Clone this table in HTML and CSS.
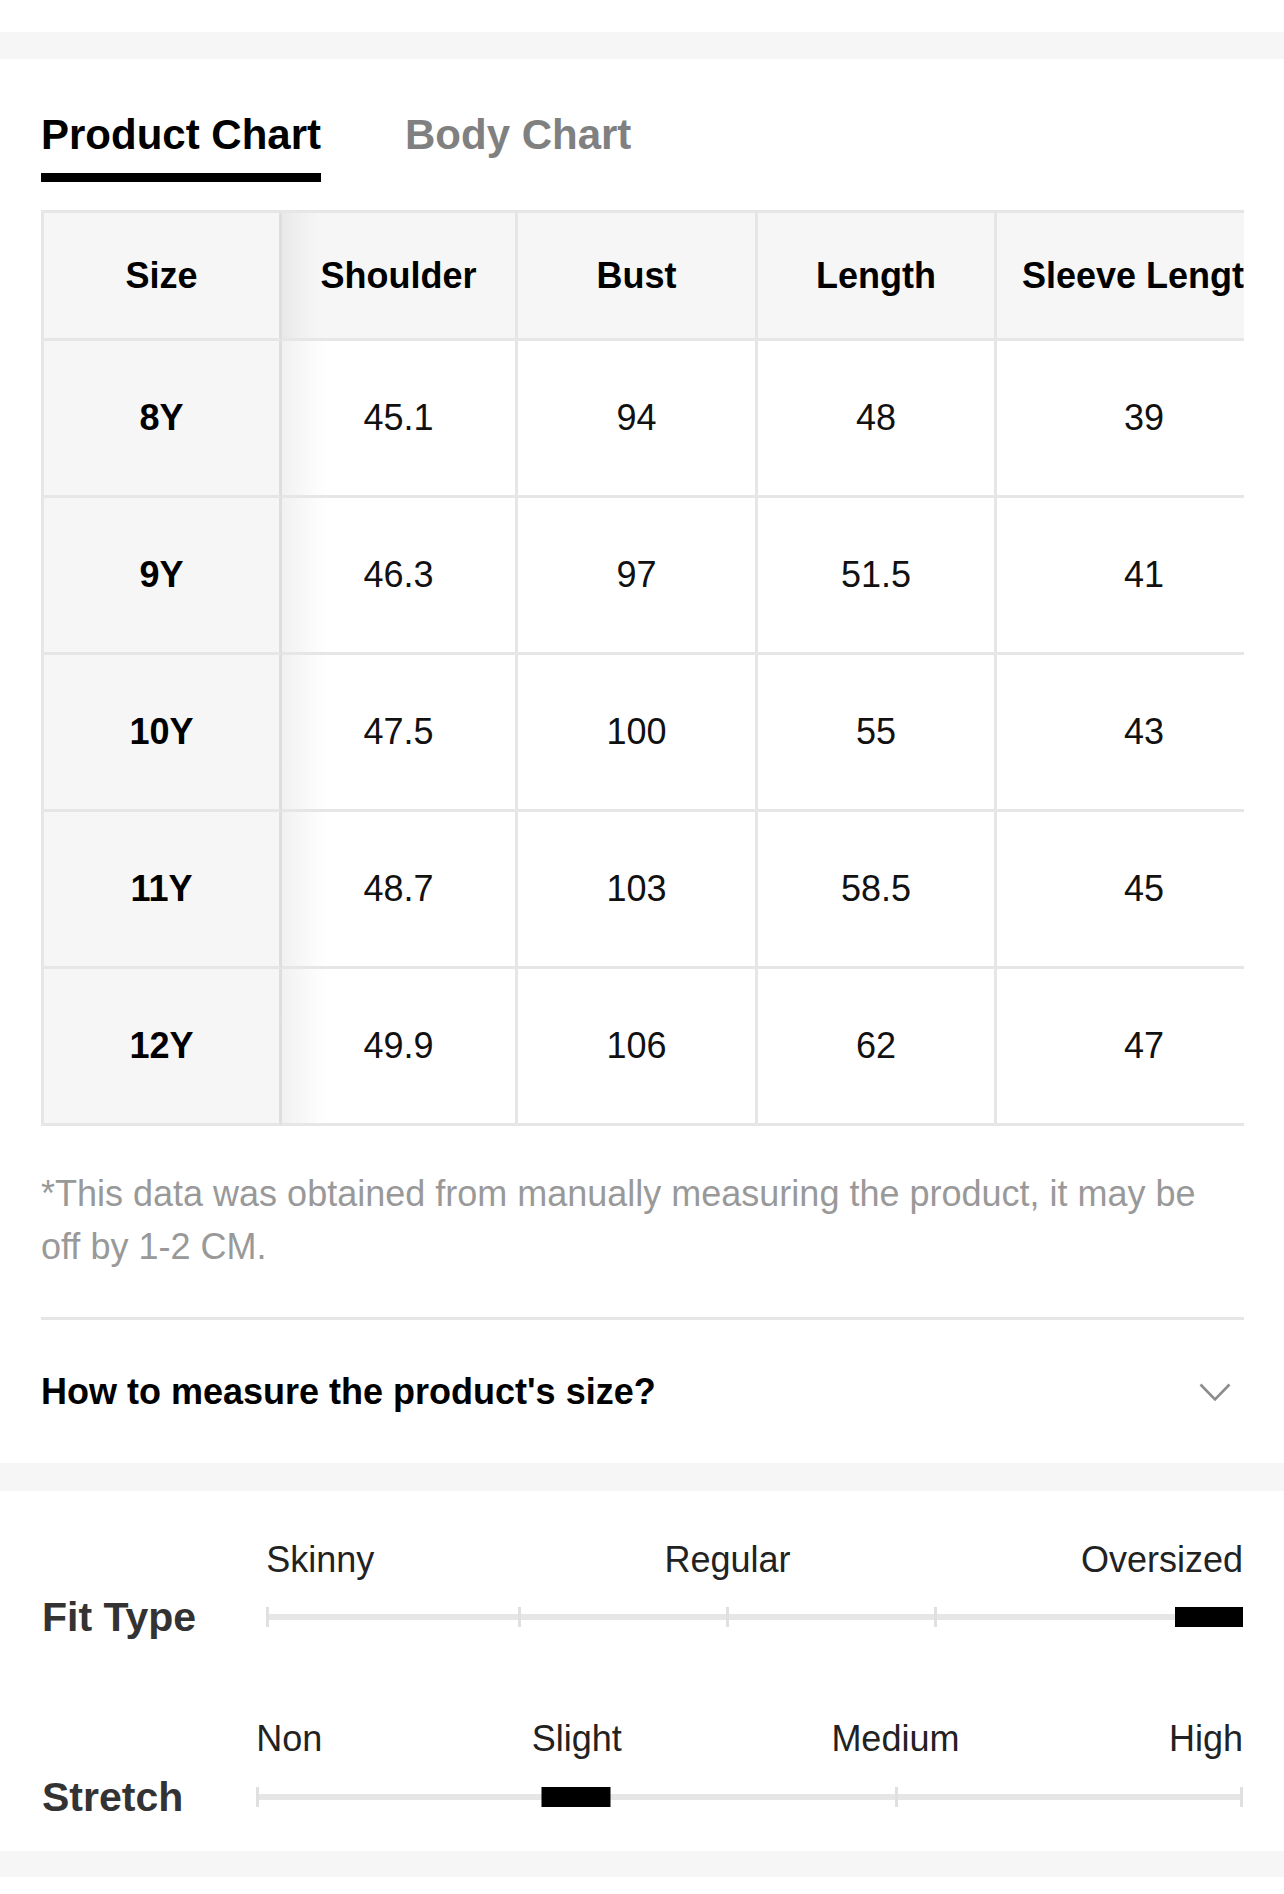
FILE: index.html
```html
<!DOCTYPE html>
<html lang="en">
<head>
<meta charset="utf-8">
<title>Size Chart</title>
<link rel="stylesheet" href="styles.css">
</head>
<body>
<div class="top-space"></div>
<div class="band"></div>
<section class="card">
  <nav class="tabs">
    <div class="tab tab-active">Product Chart</div>
    <div class="tab">Body Chart</div>
  </nav>
  <div class="table-wrap">
    <table class="chart">
      <thead>
        <tr>
          <th class="c-size">Size</th>
          <th class="c-shade">Shoulder</th>
          <th class="c-bust">Bust</th>
          <th class="c-len">Length</th>
          <th class="c-wide">Sleeve Length</th>
        </tr>
      </thead>
      <tbody>
        <tr><td class="c-size">8Y</td><td class="c-shade">45.1</td><td class="c-bust">94</td><td class="c-len">48</td><td class="c-wide">39</td></tr>
        <tr><td class="c-size">9Y</td><td class="c-shade">46.3</td><td class="c-bust">97</td><td class="c-len">51.5</td><td class="c-wide">41</td></tr>
        <tr><td class="c-size">10Y</td><td class="c-shade">47.5</td><td class="c-bust">100</td><td class="c-len">55</td><td class="c-wide">43</td></tr>
        <tr><td class="c-size">11Y</td><td class="c-shade">48.7</td><td class="c-bust">103</td><td class="c-len">58.5</td><td class="c-wide">45</td></tr>
        <tr><td class="c-size">12Y</td><td class="c-shade">49.9</td><td class="c-bust">106</td><td class="c-len">62</td><td class="c-wide">47</td></tr>
      </tbody>
    </table>
  </div>
  <p class="note">*This data was obtained from manually measuring the product, it may be off by 1-2 CM.</p>
  <div class="accordion">
    <span class="acc-title">How to measure the product's size?</span>
    <svg class="chev" width="32" height="19" viewBox="0 0 32 19" aria-hidden="true"><polyline points="1.5,1.5 16,16.5 30.5,1.5" fill="none" stroke="#8c8c8c" stroke-width="2.6"/></svg>
  </div>
</section>
<div class="band band-2"></div>
<section class="fit">
  <div class="metric metric-fit">
    <div class="scale-labels"><span>Skinny</span><span>Regular</span><span>Oversized</span></div>
    <div class="metric-name">Fit Type</div>
    <div class="track">
      <i class="tick" style="left:0%"></i>
      <i class="tick" style="left:25.8%"></i>
      <i class="tick" style="left:47.1%"></i>
      <i class="tick" style="left:68.4%"></i>
      <i class="tick tick-end"></i>
      <b class="marker marker-end"></b>
    </div>
  </div>
  <div class="metric metric-stretch">
    <div class="scale-labels"><span>Non</span><span>Slight</span><span>Medium</span><span>High</span></div>
    <div class="metric-name">Stretch</div>
    <div class="track">
      <i class="tick" style="left:0%"></i>
      <i class="tick" style="left:64.7%"></i>
      <i class="tick tick-end"></i>
      <b class="marker marker-mid" style="left:32.4%"></b>
    </div>
  </div>
</section>
<div class="band band-3"></div>
</body>
</html>
```
FILE: styles.css
```css
* { box-sizing: border-box; }
html, body { margin: 0; padding: 0; background: #fff; }
body {
  font-family: "Liberation Sans", Arial, Helvetica, sans-serif;
  color: #111;
}
.top-space { height: 32px; }
.band { height: 27px; background: #f6f6f6; }
.band-2 { height: 28px; }
.band-3 { height: 26px; }

.card { padding: 52px 40px 0 41px; }

.tabs { display: flex; gap: 84px; }
.tab {
  font-size: 42px;
  line-height: 48px;
  font-weight: 700;
  color: #808080;
  padding-bottom: 14px;
}
.tab-active {
  color: #000;
  border-bottom: 9px solid #000;
}

.table-wrap {
  margin-top: 28px;
  width: 100%;
  overflow: hidden;
}
.chart {
  border-collapse: separate;
  border-spacing: 0;
  border-top: 3px solid #e6e6e6;
  border-left: 3px solid #e6e6e6;
  font-size: 36px;
  line-height: 42px;
}
.chart th, .chart td {
  width: 238px;
  min-width: 238px;
  padding: 0;
  text-align: center;
  vertical-align: middle;
  white-space: nowrap;
  border-right: 3px solid #e6e6e6;
  border-bottom: 3px solid #e6e6e6;
}
.chart .c-shade { width: 236px; min-width: 236px; }
.chart .c-bust { width: 240px; min-width: 240px; }
.chart .c-len { width: 239px; min-width: 239px; }
.chart th {
  height: 128px;
  background: #f6f6f6;
  font-weight: 700;
  color: #000;
}
.chart td {
  height: 157px;
  font-weight: 400;
  color: #111;
  background: #fff;
}
.chart td.c-size {
  background: #f6f6f6;
  font-weight: 700;
  color: #000;
}
.chart .c-size { border-right-color: #dedede; }
.chart th.c-shade {
  background: linear-gradient(90deg, #e9e9e9, #f6f6f6 36px);
}
.chart td.c-shade {
  background: linear-gradient(90deg, #f1f1f1, #ffffff 44px);
}
.chart .c-wide {
  width: auto;
  min-width: 0;
  padding: 0 25px;
}

.note {
  margin: 41px 0 0;
  font-size: 36px;
  line-height: 53px;
  color: #999;
  padding-right: 4px;
}

.accordion {
  margin-top: 44px;
  border-top: 3px solid #e6e6e6;
  height: 146px;
  display: flex;
  align-items: center;
  justify-content: space-between;
}
.acc-title {
  font-size: 36px;
  font-weight: 700;
  color: #000;
}
.chev { margin-right: 13px; margin-top: 2px; }

.fit { padding: 48px 40px 44px 42px; }
.metric {
  display: grid;
  grid-template-columns: auto 1fr;
  grid-template-rows: 42px 20px;
  row-gap: 26px;
  align-items: center;
}
.metric-fit { column-gap: 70px; }
.metric-stretch { column-gap: 73px; margin-top: 91px; row-gap: 27px; }
.scale-labels {
  grid-column: 2;
  grid-row: 1;
  display: flex;
  justify-content: space-between;
  font-size: 36px;
  line-height: 42px;
  color: #222;
  margin-right: 1px;
}
.metric-name {
  grid-column: 1;
  grid-row: 2;
  font-size: 41px;
  line-height: 20px;
  font-weight: 700;
  color: #333;
  white-space: nowrap;
}
.track {
  grid-column: 2;
  grid-row: 2;
  position: relative;
  height: 20px;
  margin-right: 1px;
}
.track::before {
  content: "";
  position: absolute;
  left: 0;
  right: 0;
  top: 7px;
  height: 6px;
  background: #e6e6e6;
}
.tick {
  position: absolute;
  top: 0;
  width: 3px;
  height: 20px;
  background: #e0e0e0;
}
.tick-end { right: 0; }
.marker {
  position: absolute;
  top: 0;
  height: 20px;
  width: 68px;
  background: #000;
}
.marker-end { right: 0; }
.marker-mid { transform: translateX(-50%); width: 69px; }
```
